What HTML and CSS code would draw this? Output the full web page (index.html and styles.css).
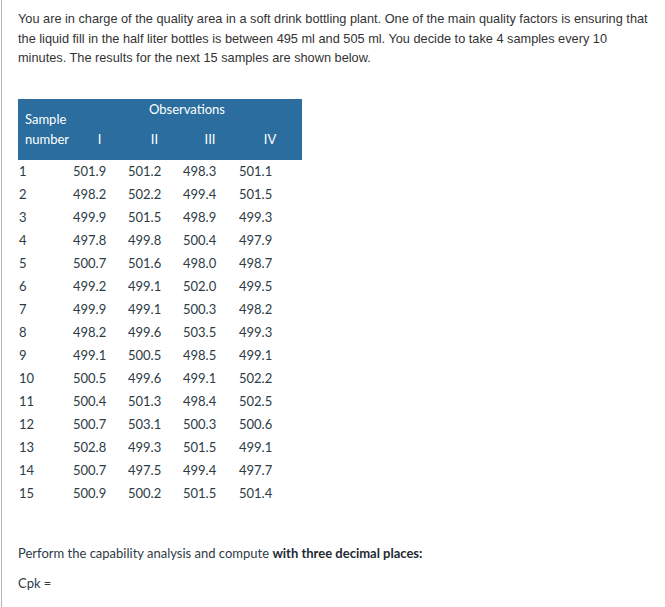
FILE: index.html
```html
<!DOCTYPE html>
<html>
<head>
<meta charset="utf-8">
<link rel="stylesheet" href="styles.css">
</head>
<body>
<div class="page">
  <p class="intro">You are in charge of the quality area in a soft drink bottling plant. One of the main quality factors is ensuring that the liquid fill in the half liter bottles is between 495 ml and 505 ml. You decide to take 4 samples every 10 minutes. The results for the next 15 samples are shown below.</p>
  <table class="data">
    <colgroup>
      <col class="c0"><col class="c1"><col class="c2"><col class="c3"><col class="c4">
    </colgroup>
    <thead>
      <tr>
        <th rowspan="2" class="sample">Sample<br>number</th>
        <th colspan="4" class="obs">Observations</th>
      </tr>
      <tr class="roman">
        <th>I</th><th>II</th><th>III</th><th>IV</th>
      </tr>
    </thead>
    <tbody>
      <tr><td>1</td><td>501.9</td><td>501.2</td><td>498.3</td><td>501.1</td></tr>
      <tr><td>2</td><td>498.2</td><td>502.2</td><td>499.4</td><td>501.5</td></tr>
      <tr><td>3</td><td>499.9</td><td>501.5</td><td>498.9</td><td>499.3</td></tr>
      <tr><td>4</td><td>497.8</td><td>499.8</td><td>500.4</td><td>497.9</td></tr>
      <tr><td>5</td><td>500.7</td><td>501.6</td><td>498.0</td><td>498.7</td></tr>
      <tr><td>6</td><td>499.2</td><td>499.1</td><td>502.0</td><td>499.5</td></tr>
      <tr><td>7</td><td>499.9</td><td>499.1</td><td>500.3</td><td>498.2</td></tr>
      <tr><td>8</td><td>498.2</td><td>499.6</td><td>503.5</td><td>499.3</td></tr>
      <tr><td>9</td><td>499.1</td><td>500.5</td><td>498.5</td><td>499.1</td></tr>
      <tr><td>10</td><td>500.5</td><td>499.6</td><td>499.1</td><td>502.2</td></tr>
      <tr><td>11</td><td>500.4</td><td>501.3</td><td>498.4</td><td>502.5</td></tr>
      <tr><td>12</td><td>500.7</td><td>503.1</td><td>500.3</td><td>500.6</td></tr>
      <tr><td>13</td><td>502.8</td><td>499.3</td><td>501.5</td><td>499.1</td></tr>
      <tr><td>14</td><td>500.7</td><td>497.5</td><td>499.4</td><td>497.7</td></tr>
      <tr><td>15</td><td>500.9</td><td>500.2</td><td>501.5</td><td>501.4</td></tr>
    </tbody>
  </table>
  <p class="task">Perform the capability analysis and compute <strong>with three decimal places:</strong></p>
  <p class="task">Cpk =</p>
</div>
</body>
</html>
```

FILE: styles.css
```css
html, body {
  margin: 0;
  padding: 0;
  background: #fff;
}

.page {
  margin-left: 1px;
  border-left: 1px solid #b5b5b5;
  min-height: 607px;
  box-sizing: border-box;
  padding: 9px 14px 0 16px;
}

.intro {
  margin: 0 0 31px 0;
  font-family: "Liberation Sans", Arial, sans-serif;
  font-size: 12.75px;
  line-height: 19.5px;
  color: #333;
}

.data {
  border-collapse: collapse;
  width: 284px;
  table-layout: fixed;
  font-family: Lato, sans-serif;
  font-size: 13px;
  color: #2d3b45;
  margin-bottom: 38px;
}

.c0 { width: 54px; }
.c1 { width: 55px; }
.c2 { width: 55px; }
.c3 { width: 56px; }
.c4 { width: 64px; }

.data thead th {
  background: #2a6d9e;
  color: #fff;
  font-weight: normal;
  padding: 0;
}

.data th.sample {
  text-align: left;
  padding-left: 7px;
  line-height: 20px;
  vertical-align: middle;
}

.data th.obs {
  height: 30px;
  line-height: 20px;
  vertical-align: top;
  padding-top: 0;
  text-align: center;
}

.data tr.roman th {
  height: 31px;
  text-align: center;
  vertical-align: top;
  line-height: 20px;
  padding-top: 0;
}

.data td {
  height: 23px;
  padding: 0 0 0 1px;
  line-height: 23px;
  text-align: left;
}

.task {
  margin: 0 0 10px 0;
  font-family: Lato, sans-serif;
  font-size: 13px;
  line-height: 20px;
  color: #2d3b45;
}

.task strong {
  font-weight: bold;
  color: #1f2a33;
}
```
